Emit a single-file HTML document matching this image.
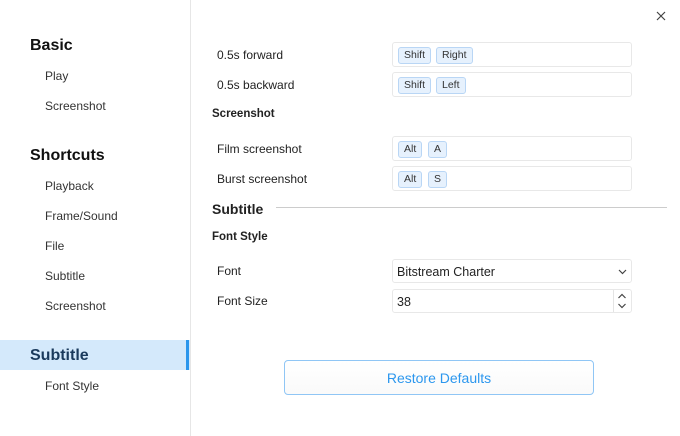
<!DOCTYPE html>
<html><head><style>
*{margin:0;padding:0;box-sizing:border-box}
body{width:680px;height:436px;background:#fff;font-family:"Liberation Sans",sans-serif;color:#222;position:relative;overflow:hidden;font-size:12px}
.a{position:absolute;white-space:nowrap;line-height:1}
.side{position:absolute;left:0;top:0;width:191px;height:436px;border-right:1px solid #e6e6e6}
.h{font-size:16px;font-weight:bold;color:#111}
.it{font-size:12px;color:#333}
.box{position:absolute;left:392px;width:240px;height:25px;border:1px solid #e8e8e8;border-radius:3px}
.k{position:absolute;top:4px;height:17px;border:1px solid #b9d6f5;background:#e6f1fd;border-radius:3px;font-size:10.5px;line-height:15px;padding:0 5px;color:#333}
.lab{font-size:12px;color:#222}
</style></head><body>
<div class="side"></div>
<div class="a" style="left:0;top:340px;width:190px;height:30px;background:#d4e9fb"></div>
<div class="a" style="left:186px;top:340px;width:3px;height:30px;background:#2b96ec"></div>
<div class="a h" style="left:30px;top:38px">Basic</div>
<div class="a it" style="left:45px;top:70px">Play</div>
<div class="a it" style="left:45px;top:100px">Screenshot</div>
<div class="a h" style="left:30px;top:148px">Shortcuts</div>
<div class="a it" style="left:45px;top:180px">Playback</div>
<div class="a it" style="left:45px;top:210px">Frame/Sound</div>
<div class="a it" style="left:45px;top:240px">File</div>
<div class="a it" style="left:45px;top:270px">Subtitle</div>
<div class="a it" style="left:45px;top:300px">Screenshot</div>
<div class="a h" style="left:30px;top:348px;color:#1a3a5c">Subtitle</div>
<div class="a it" style="left:45px;top:380px">Font Style</div>

<svg class="a" style="left:656px;top:11px" width="10" height="10"><path d="M1 1L9 9M9 1L1 9" stroke="#444" stroke-width="1.2"/></svg>

<div class="a lab" style="left:217px;top:49px">0.5s forward</div>
<div class="a lab" style="left:217px;top:79px">0.5s backward</div>
<div class="a" style="left:212px;top:109px;font-size:11.5px;font-weight:bold">Screenshot</div>
<div class="a lab" style="left:217px;top:143px">Film screenshot</div>
<div class="a lab" style="left:217px;top:173px">Burst screenshot</div>
<div class="a" style="left:212px;top:202px;font-size:14px;font-weight:bold">Subtitle</div>
<div class="a" style="left:276px;top:207px;width:391px;height:1px;background:#ccc"></div>
<div class="a" style="left:212px;top:232px;font-size:11.5px;font-weight:bold">Font Style</div>
<div class="a lab" style="left:217px;top:265px">Font</div>
<div class="a lab" style="left:217px;top:295px">Font Size</div>

<div class="box" style="top:42px"><span class="k" style="left:5px">Shift</span><span class="k" style="left:43px">Right</span></div>
<div class="box" style="top:72px"><span class="k" style="left:5px">Shift</span><span class="k" style="left:43px">Left</span></div>
<div class="box" style="top:136px"><span class="k" style="left:5px">Alt</span><span class="k" style="left:35px">A</span></div>
<div class="box" style="top:166px"><span class="k" style="left:5px">Alt</span><span class="k" style="left:35px">S</span></div>

<div class="box" style="top:259px;height:24px"><span class="a" style="left:4px;top:6px;font-size:12.5px">Bitstream Charter</span>
<svg class="a" style="left:225px;top:9px" width="9" height="6"><path d="M1 1L4.5 4.5L8 1" stroke="#444" stroke-width="1.2" fill="none"/></svg></div>
<div class="box" style="top:289px;height:24px"><span class="a" style="left:4px;top:6px;font-size:12.5px">38</span>
<div class="a" style="left:220px;top:0;width:1px;height:22px;background:#e4e4e4"></div>
<svg class="a" style="left:224px;top:3px" width="10" height="17"><path d="M1.5 5L5 1.5L8.5 5M1.5 11L5 14.5L8.5 11" stroke="#444" stroke-width="1.2" fill="none"/></svg></div>

<div class="a" style="left:284px;top:360px;width:310px;height:35px;border:1px solid #90c6f5;border-radius:4px;background:linear-gradient(#fff,#fafafa);color:#2c97ee;font-size:14px;text-align:center;line-height:35px">Restore Defaults</div>
</body></html>
